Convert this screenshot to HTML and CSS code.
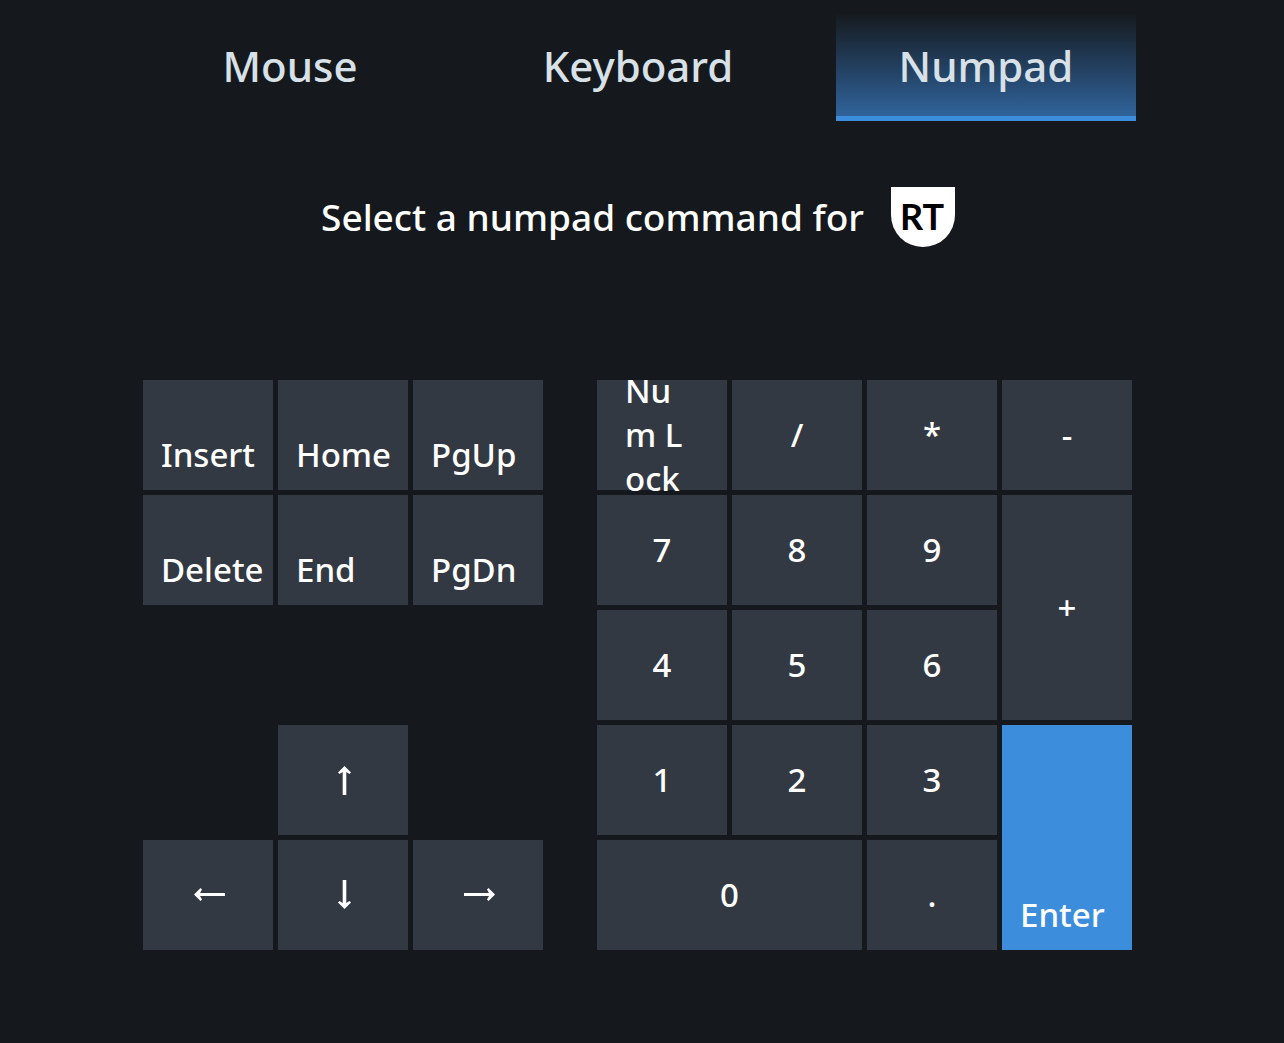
FILE: index.html
```html
<!DOCTYPE html>
<html lang="en">
<head>
<meta charset="utf-8">
<title>Numpad command</title>
<link rel="stylesheet" href="styles.css">
</head>
<body>
<nav class="tabs" aria-label="Command type">
  <button class="tab" type="button">Mouse</button>
  <button class="tab" type="button">Keyboard</button>
  <button class="tab tab-active" type="button" aria-current="page">Numpad</button>
</nav>
<main>
  <h1 class="prompt">Select a numpad command for
    <svg class="trigger" viewBox="0 0 64 60" role="img" aria-label="RT">
      <path d="M0 0H64V28A32 32 0 0 1 0 28Z" fill="#fff"/>
      <text x="31" y="43" text-anchor="middle">RT</text>
    </svg>
  </h1>
  <div class="keys">
    <div class="pad nav-pad">
      <button class="key word" type="button">Insert</button>
      <button class="key word" type="button">Home</button>
      <button class="key word" type="button">PgUp</button>
      <button class="key word" type="button">Delete</button>
      <button class="key word" type="button">End</button>
      <button class="key word" type="button">PgDn</button>
      <button class="key up" type="button" aria-label="Up"><svg class="arrow" viewBox="0 0 32 32"><path d="M17.500 2L24 8.500L22.500 10L19.300 8V31H15.700V8L12.500 10L11 8.500Z"/></svg></button>
      <button class="key left" type="button" aria-label="Left"><svg class="arrow" viewBox="0 0 32 32"><path d="M2 15.500L8.500 9L10 10.500L8 14H33V17H8L10 20.500L8.500 22Z"/></svg></button>
      <button class="key down" type="button" aria-label="Down"><svg class="arrow" viewBox="0 0 32 32"><path d="M17.500 30L24 23.500L22.500 22L19.300 24V1H15.700V24L12.500 22L11 23.500Z"/></svg></button>
      <button class="key right" type="button" aria-label="Right"><svg class="arrow" viewBox="0 0 32 32"><path d="M33 15.500L26.500 9L25 10.500L27 14H2V17H27L25 20.500L26.500 22Z"/></svg></button>
    </div>
    <div class="pad num-pad">
      <button class="key num-lock" type="button">Num Lock</button>
      <button class="key" type="button">/</button>
      <button class="key" type="button">*</button>
      <button class="key" type="button">-</button>
      <button class="key" type="button">7</button>
      <button class="key" type="button">8</button>
      <button class="key" type="button">9</button>
      <button class="key tall" type="button">+</button>
      <button class="key" type="button">4</button>
      <button class="key" type="button">5</button>
      <button class="key" type="button">6</button>
      <button class="key" type="button">1</button>
      <button class="key" type="button">2</button>
      <button class="key" type="button">3</button>
      <button class="key tall word selected" type="button">Enter</button>
      <button class="key wide" type="button">0</button>
      <button class="key" type="button">.</button>
    </div>
  </div>
</main>
</body>
</html>
```
FILE: styles.css
```css
* { box-sizing: border-box; }
body {
  margin: 0;
  min-height: 100vh;
  background: #15191d;
  color: #fff;
  font-family: "Noto Sans", "Open Sans", sans-serif;
  font-weight: 500;
}
button {
  margin: 0;
  border: 0;
  font: inherit;
  color: inherit;
}
.tabs {
  display: flex;
  justify-content: center;
  gap: 48px;
  padding-top: 13px;
  padding-right: 8px;
}
.tab {
  width: 300px;
  height: 108px;
  padding: 2px 0 0;
  border-bottom: 5px solid transparent;
  background: none;
  color: #d9e1e8;
  font-size: 42px;
}
.tab-active {
  border-bottom-color: #3d8ddd;
  background: linear-gradient(#15191d, #30639b);
}
.prompt {
  display: flex;
  justify-content: center;
  align-items: center;
  gap: 27px;
  margin: 66px 8px 133px 0;
  font-size: 37px;
  line-height: 60px;
  font-weight: 500;
}
.trigger { width: 64px; height: 60px; }
.trigger text {
  font: bold 36px Lato, sans-serif;
  fill: #000;
}
.keys {
  display: flex;
  justify-content: center;
  gap: 54px;
  padding: 0 9px 93px 0;
}
.pad {
  display: grid;
  grid-auto-rows: 110px;
  gap: 5px;
}
.nav-pad { grid-template-columns: repeat(3, 130px); }
.num-pad { grid-template-columns: repeat(4, 130px); }
.key {
  display: flex;
  justify-content: center;
  align-items: center;
  padding: 0;
  background: #333942;
  font-size: 33px;
  line-height: 44px;
}
.word {
  justify-content: flex-start;
  align-items: flex-end;
  padding: 0 0 13px 18px;
}
.num-lock {
  padding: 0 38px 0 28px;
  text-align: left;
  word-break: break-all;
}
.up { grid-area: 4 / 2; }
.left { grid-area: 5 / 1; }
.down { grid-area: 5 / 2; }
.right { grid-area: 5 / 3; }
.tall { grid-row: span 2; }
.wide { grid-column: span 2; }
.selected { background: #3d8ddd; }
.arrow {
  width: 32px;
  height: 32px;
  overflow: visible;
  fill: #fff;
}
```
